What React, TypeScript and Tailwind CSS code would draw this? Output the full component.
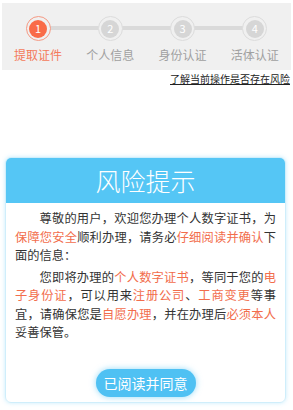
import React from "react";

const steps = ["提取证件", "个人信息", "身份认证", "活体认证"];

function Hl({ children }: { children: React.ReactNode }) {
  return <span className="text-[#f26d4c]">{children}</span>;
}

export default function App() {
  return (
    <div
      className="w-[293px] h-[410px] bg-white overflow-hidden"
      style={{ fontFamily: '"Noto Sans CJK SC", "Noto Sans", sans-serif' }}
    >
      {/* 步骤条 */}
      <div className="mt-[3px] mx-[2px] h-[67px] bg-[#f0f0f0] relative">
        <div className="absolute left-[36px] right-[36px] top-[23px] h-[4px] bg-[#dadada]" />
        <div className="relative grid grid-cols-4">
          {steps.map((s, i) => (
            <div key={s} className="flex flex-col items-center">
              <div
                className={`mt-[13px] w-[25px] h-[25px] rounded-full border flex items-center justify-center ${
                  i === 0 ? "border-[#f59a84] bg-[#f0f0f0]" : "border-[#dcdcdc] bg-[#f0f0f0]"
                }`}
              >
                <div
                  className={`w-[18px] h-[18px] rounded-full flex items-center justify-center text-white text-[11px] leading-none ${
                    i === 0 ? "bg-[#f96b48]" : "bg-[#d6d6d6]"
                  }`}
                >
                  {i + 1}
                </div>
              </div>
              <div
                className={`mt-[8px] text-[12px] leading-none ${
                  i === 0 ? "text-[#f47a5b]" : "text-[#a0a0a0]"
                }`}
              >
                {s}
              </div>
            </div>
          ))}
        </div>
      </div>

      <div className="flex justify-end pr-[3px] mt-[2px]">
        <span className="text-[10px] leading-[14px] text-[#222] underline">了解当前操作是否存在风险</span>
      </div>

      {/* 风险提示卡片 */}
      <div className="mt-[71px] ml-[5px] w-[281px] h-[246px] rounded-[6px] border border-[#cfeefb] shadow-[0_0_4px_rgba(91,200,245,0.35)] overflow-hidden flex flex-col">
        <div className="h-[45px] bg-[#55c6f5] flex items-center justify-center text-white text-[25px] leading-none font-light">
          风险提示
        </div>
        <div className="flex-1 pl-[9px] pr-[9px] pt-[6px] text-[12.25px] leading-[18.5px] text-[#333] text-justify">
          <p className="indent-[2em]">
            尊敬的用户，欢迎您办理个人数字证书，为<Hl>保障您安全</Hl>顺利办理，请务必<Hl>仔细阅读并确认</Hl>下面的信息：
          </p>
          <p className="indent-[2em] mt-[3px]">
            您即将办理的<Hl>个人数字证书</Hl>，等同于您的<Hl>电子身份证</Hl>，可以用来<Hl>注册公司</Hl>、<Hl>工商变更</Hl>等事宜，请确保您是<Hl>自愿办理</Hl>，并在办理后<Hl>必须本人</Hl>妥善保管。
          </p>
          <div className="flex justify-center mt-[27px]">
            <button className="w-[100px] h-[28px] rounded-full bg-[#4fc1f3] text-white text-[14px] leading-none shadow-[0_0_6px_rgba(79,193,243,0.6)]">
              已阅读并同意
            </button>
          </div>
        </div>
      </div>
    </div>
  );
}
